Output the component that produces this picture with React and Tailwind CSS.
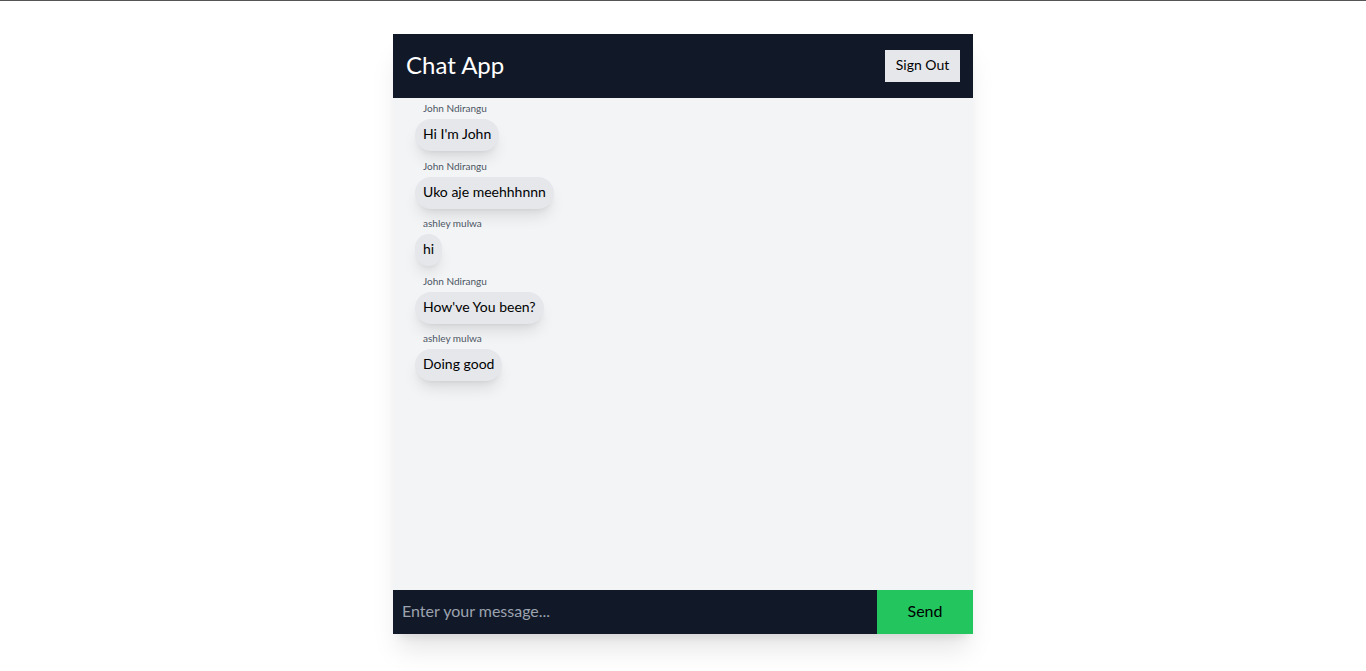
import { useState } from 'react';

const messages = [
    { name: "John Ndirangu", text: "Hi I'm John" },
    { name: "John Ndirangu", text: "Uko aje meehhhnnn" },
    { name: "ashley mulwa", text: "hi" },
    { name: "John Ndirangu", text: "How've You been?" },
    { name: "ashley mulwa", text: "Doing good" },
];

export default function App() {
    const [message, setMessage] = useState("");

    return (
        <div className="min-h-screen bg-white border-t border-[#555] font-['Lato',sans-serif]">
            <div className="w-[580px] mx-auto mt-[33px] flex flex-col shadow-xl">
                <header className="h-16 bg-[#111827] flex items-center justify-between px-[13px]">
                    <h1 className="text-white text-2xl -mt-0.5">Chat App</h1>
                    <button className="bg-[#e5e7eb] text-sm text-black w-[75px] h-8 pb-0.5">Sign Out</button>
                </header>

                <div className="h-[492px] bg-[#f3f4f6] pt-[3px] pl-[22px]">
                    {messages.map((m, i) => (
                        <div key={i} className="mb-[7.5px] flex flex-col items-start">
                            <span className="text-[10px] leading-[14px] text-[#4b5563] pl-2 mb-1">{m.name}</span>
                            <div className="bg-[#e5e7eb] rounded-2xl shadow-lg px-2 pt-[5px] pb-[7px] text-sm leading-5 text-black">
                                {m.text}
                            </div>
                        </div>
                    ))}
                </div>

                <form className="flex h-11" onSubmit={(e) => e.preventDefault()}>
                    <input
                        value={message}
                        onChange={(e) => setMessage(e.target.value)}
                        placeholder="Enter your message..."
                        className="flex-1 bg-[#111827] text-white placeholder-[#9ca3af] px-[9px] pb-0.5 text-base outline-none"
                    />
                    <button type="submit" className="w-24 bg-[#22c55e] text-black text-base pb-0.5">Send</button>
                </form>
            </div>
        </div>
    )
}
